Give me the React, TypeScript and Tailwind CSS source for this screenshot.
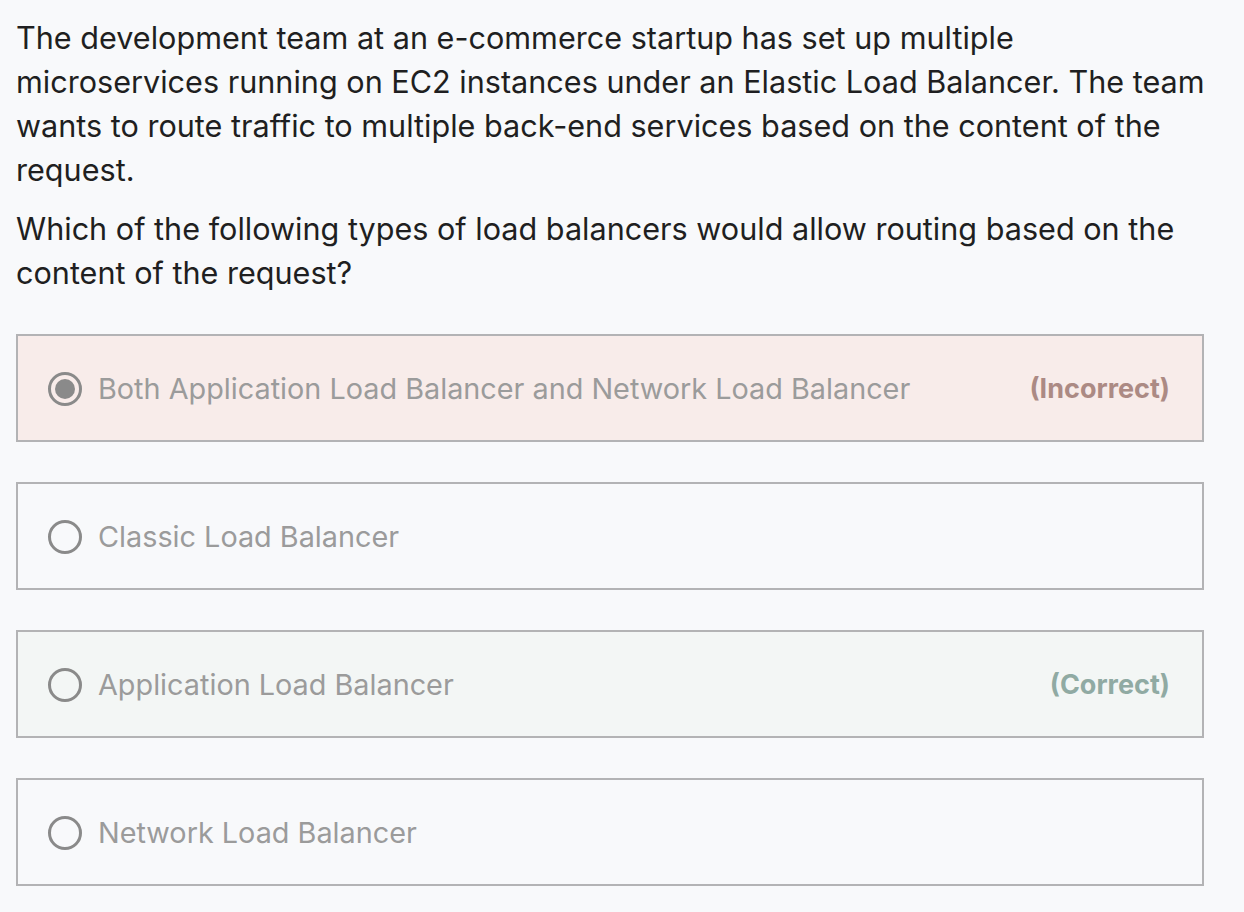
import React from 'react';

type Option = {
    label: string;
    selected?: boolean;
    status?: 'correct' | 'incorrect';
};

const options: Option[] = [
    { label: 'Both Application Load Balancer and Network Load Balancer', selected: true, status: 'incorrect' },
    { label: 'Classic Load Balancer' },
    { label: 'Application Load Balancer', status: 'correct' },
    { label: 'Network Load Balancer' },
];

const Radio: React.FC<{ checked?: boolean }> = ({ checked }) => (
    <span className="flex h-[34px] w-[34px] shrink-0 items-center justify-center rounded-full border-[3px] border-[#8a8a8a]">
        {checked && <span className="h-[20px] w-[20px] rounded-full bg-[#8a8a8a]" />}
    </span>
);

const OptionRow: React.FC<{ option: Option }> = ({ option }) => {
    const bg =
        option.status === 'incorrect'
            ? 'bg-[#f8ecea]'
            : option.status === 'correct'
              ? 'bg-[#f3f6f5]'
              : 'bg-[#f8f9fb]';

    return (
        <div className={`flex h-[108px] items-center border-2 border-[#b3b3b5] pl-[30px] pr-[32px] pt-[2px] ${bg}`}>
            <Radio checked={option.selected} />
            <span className="ml-[16px] flex-1 text-[28.8px] text-[#9b9b9b]">{option.label}</span>
            {option.status === 'incorrect' && (
                <span className="text-[27px] font-bold text-[#ac8a84]">(Incorrect)</span>
            )}
            {option.status === 'correct' && (
                <span className="text-[27px] font-bold text-[#90aaa3]">(Correct)</span>
            )}
        </div>
    );
};

export default function App() {
    return (
        <div className="min-h-[912px] bg-[#f8f9fb] px-4 pt-4 pb-[26px] font-['Inter',sans-serif]">
            <div className="w-[1198px]">
                <p className="text-[30.6px] leading-[44px] text-[#1f1f21]">
                    The development team at an e-commerce startup has set up multiple microservices running on EC2
                    instances under an Elastic Load Balancer. The team wants to route traffic to multiple back-end
                    services based on the content of the request.
                </p>
                <p className="mt-[15px] text-[30.6px] leading-[44px] text-[#1f1f21]">
                    Which of the following types of load balancers would allow routing based on the content of the
                    request?
                </p>
            </div>
            <div className="mt-[39px] flex w-[1188px] flex-col gap-[40px]">
                {options.map((o) => (
                    <OptionRow key={o.label} option={o} />
                ))}
            </div>
        </div>
    );
}
